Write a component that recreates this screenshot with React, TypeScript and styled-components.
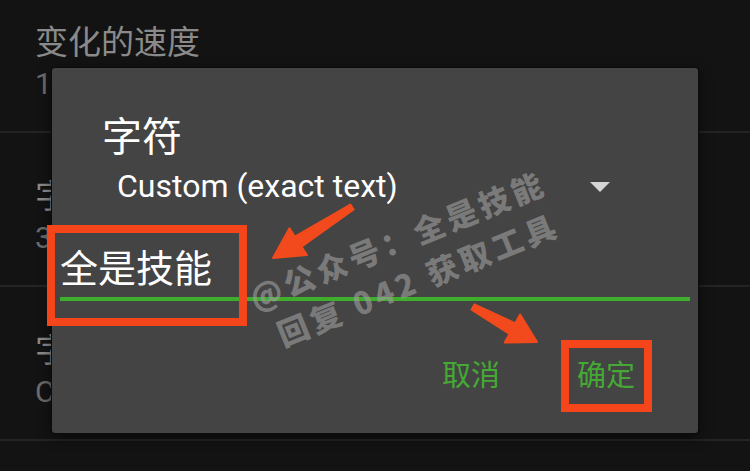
import React from "react";
import styled, { createGlobalStyle } from "styled-components";

const GlobalStyle = createGlobalStyle`
  html, body {
    margin: 0;
    padding: 0;
    background: #131313;
  }
  body {
    font-family: Roboto, "Noto Sans CJK SC", sans-serif;
  }
`;

const items = [
  { title: "变化的速度", value: "10" },
  { title: "字符", value: "3" },
  { title: "字符", value: "Custom" },
];

function App() {
  return (
    <>
      <GlobalStyle />
      <Screen>
        <List>
          {items.map((it, i) => (
            <Item key={i}>
              <ItemTitle>{it.title}</ItemTitle>
              <ItemValue>{it.value}</ItemValue>
            </Item>
          ))}
        </List>

        <Dialog>
          <Title>字符</Title>
          <Spinner>
            <span>Custom (exact text)</span>
            <Caret />
          </Spinner>
          <Field>全是技能</Field>
          <Actions>
            <ActionButton>取消</ActionButton>
            <ActionButton>确定</ActionButton>
          </Actions>
        </Dialog>

        <Watermark>
          <WmLine>@公众号：全是技能</WmLine>
          <WmLine $indent={12}>回复 042 获取工具</WmLine>
        </Watermark>

        <RedBox $x={47} $y={225} $w={200} $h={101} />
        <RedBox $x={561} $y={340} $w={91} $h={72} />

        <Arrows width="750" height="471" viewBox="0 0 750 471">
          {/* arrow pointing at the text field */}
          <path
            d="M350.4 204.5 L294.9 236.7 L289.5 228.3 L273 258 L306.9 255.1 L301.5 246.7 L353.6 209.5 Z"
            fill="#f24a1c"
            stroke="#f24a1c"
            strokeWidth="2"
            strokeLinejoin="round"
          />
          {/* arrow pointing at the OK button */}
          <path
            d="M474.4 304.4 L515.3 323.3 L520.1 314.6 L537 342 L504.7 342.6 L509.5 333.9 L471.6 309.6 Z"
            fill="#f24a1c"
            stroke="#f24a1c"
            strokeWidth="2"
            strokeLinejoin="round"
          />
        </Arrows>
      </Screen>
    </>
  );
}

export default App;

const Screen = styled.div`
  position: relative;
  width: 750px;
  height: 471px;
  overflow: hidden;
  background: #131313;
`;

const List = styled.div`
  display: flex;
  flex-direction: column;
  margin-top: -21px;
`;

const Item = styled.div`
  height: 154px;
  padding: 41px 0 0 35px;
  box-sizing: border-box;
  border-bottom: 2px solid #242424;
  display: flex;
  flex-direction: column;
  gap: 6px;
`;

const ItemTitle = styled.div`
  font-family: "Noto Sans CJK SC", sans-serif;
  font-size: 33px;
  line-height: 40px;
  color: #8a8a8a;
`;

const ItemValue = styled.div`
  font-family: Roboto, sans-serif;
  font-size: 30px;
  line-height: 36px;
  color: #6b6b6b;
`;

const Dialog = styled.div`
  position: absolute;
  left: 52px;
  top: 68px;
  width: 646px;
  height: 365px;
  box-sizing: border-box;
  background: #444444;
  border-radius: 3px;
  box-shadow: 0 0 0 1px #0c0c0c, 0 4px 14px rgba(0, 0, 0, 0.6);
  display: flex;
  flex-direction: column;
  padding: 40px 8px 0 8px;
`;

const Title = styled.div`
  font-family: "Noto Sans CJK SC", sans-serif;
  font-size: 40px;
  line-height: 52px;
  color: #ffffff;
  padding-left: 42px;
`;

const Spinner = styled.div`
  display: flex;
  align-items: center;
  justify-content: space-between;
  height: 44px;
  margin-top: 4px;
  padding: 0 80px 0 57px;
  font-family: Roboto, sans-serif;
  font-size: 32px;
  color: #ffffff;
`;

const Caret = styled.div`
  width: 0;
  height: 0;
  border-left: 10px solid transparent;
  border-right: 10px solid transparent;
  border-top: 10px solid #d6d6d6;
  margin-top: 2px;
`;

const Field = styled.div`
  margin-top: 33px;
  padding: 0 0 6px 0;
  font-family: "Noto Sans CJK SC", sans-serif;
  font-size: 38px;
  line-height: 50px;
  color: #ffffff;
  border-bottom: 4px solid #3eae2c;
`;

const Actions = styled.div`
  display: flex;
  justify-content: flex-end;
  gap: 77px;
  padding: 52px 55px 0 0;
`;

const ActionButton = styled.div`
  font-family: "Noto Sans CJK SC", sans-serif;
  font-size: 29px;
  line-height: 40px;
  color: #45a934;
`;

const Watermark = styled.div`
  position: absolute;
  left: 244px;
  top: 282px;
  transform: rotate(-22deg);
  transform-origin: left top;
  display: flex;
  flex-direction: column;
  gap: 8px;
  pointer-events: none;
`;

const WmLine = styled.div<{ $indent?: number }>`
  font-family: "Noto Sans CJK SC", sans-serif;
  font-weight: 900;
  font-size: 31px;
  line-height: 36px;
  letter-spacing: 4px;
  white-space: nowrap;
  color: rgba(160, 160, 160, 0.6);
  padding-left: ${(p) => p.$indent ?? 0}px;
`;

const RedBox = styled.div<{ $x: number; $y: number; $w: number; $h: number }>`
  position: absolute;
  left: ${(p) => p.$x}px;
  top: ${(p) => p.$y}px;
  width: ${(p) => p.$w}px;
  height: ${(p) => p.$h}px;
  box-sizing: border-box;
  border: 8px solid #f5451b;
  pointer-events: none;
`;

const Arrows = styled.svg`
  position: absolute;
  left: 0;
  top: 0;
  pointer-events: none;
`;
